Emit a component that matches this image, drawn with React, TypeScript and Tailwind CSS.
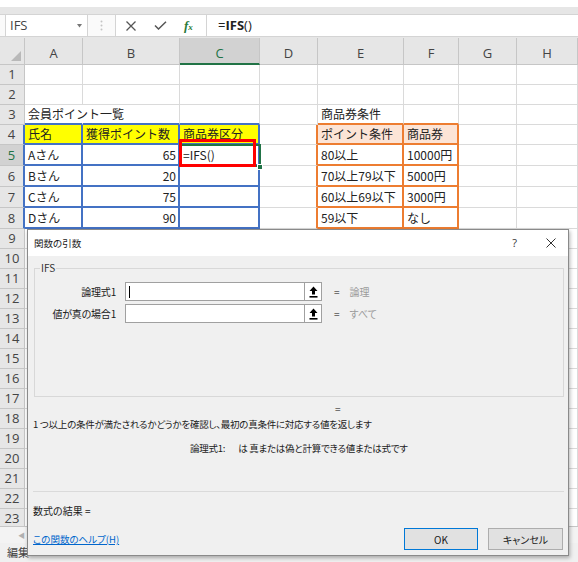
import React from 'react';

const COLW = ['w-[25px]', 'w-[58px]', 'w-[97px]', 'w-[80px]', 'w-[58px]', 'w-[86px]', 'w-[55px]', 'w-[58px]', 'w-[61px]'];
const LETTERS = ['A', 'B', 'C', 'D', 'E', 'F', 'G', 'H'];

type Cell = { t: string; right?: boolean };
const DATA: Record<string, Cell> = {
  '3-1': { t: '会員ポイント一覧' },
  '3-5': { t: '商品券条件' },
  '4-1': { t: '氏名' },
  '4-2': { t: '獲得ポイント数' },
  '4-3': { t: '商品券区分' },
  '4-5': { t: 'ポイント条件' },
  '4-6': { t: '商品券' },
  '5-1': { t: 'Aさん' },
  '5-2': { t: '65', right: true },
  '5-3': { t: '=IFS()' },
  '5-5': { t: '80以上' },
  '5-6': { t: '10000円' },
  '6-1': { t: 'Bさん' },
  '6-2': { t: '20', right: true },
  '6-5': { t: '70以上79以下' },
  '6-6': { t: '5000円' },
  '7-1': { t: 'Cさん' },
  '7-2': { t: '75', right: true },
  '7-5': { t: '60以上69以下' },
  '7-6': { t: '3000円' },
  '8-1': { t: 'Dさん' },
  '8-2': { t: '90', right: true },
  '8-5': { t: '59以下' },
  '8-6': { t: 'なし' },
};

const blue = (r: number, c: number) => r >= 4 && r <= 8 && c >= 1 && c <= 3;
const orange = (r: number, c: number) => r >= 4 && r <= 8 && c >= 5 && c <= 6;

function rightBorder(r: number, c: number) {
  if (blue(r, c) || blue(r, c + 1)) return 'border-r-2 border-r-[#4472c4]';
  if (orange(r, c) || orange(r, c + 1)) return 'border-r-2 border-r-[#ed7d31]';
  if (r === 3 && c === 1) return 'border-r border-r-transparent';
  return 'border-r border-r-[#dadada]';
}
function bottomBorder(r: number, c: number) {
  if (blue(r, c) || blue(r + 1, c)) return 'border-b-2 border-b-[#4472c4]';
  if (orange(r, c) || orange(r + 1, c)) return 'border-b-2 border-b-[#ed7d31]';
  return 'border-b border-b-[#dadada]';
}

function RefIcon() {
  return (
    <svg width="9" height="12" viewBox="0 0 9 12">
      <path d="M4.5 0.5 L8.5 5 H6 V8.5 H3 V5 H0.5 Z" fill="#000" />
      <rect x="0.5" y="10" width="8" height="1.6" fill="#000" />
    </svg>
  );
}

function ArgRow({ label, hint, cursor, extra }: { label: string; hint: string; cursor?: boolean; extra?: string }) {
  return (
    <div className={`flex items-center h-[19px] ${extra ?? ''}`}>
      <div className="w-[81px] text-right text-[#1a1a1a] tracking-[-0.2px]">{label}</div>
      <div className="ml-[9px] w-[180px] h-[19px] bg-white border border-[#a0a0a0] flex items-center pl-[3px]">
        {cursor ? <span className="w-px h-[12px] bg-black" /> : null}
      </div>
      <div className="w-[17px] h-[19px] bg-white border border-l-0 border-[#a0a0a0] flex items-center justify-center">
        <RefIcon />
      </div>
      <span className="ml-[12px] text-[#555]">=</span>
      <span className="ml-[10px] text-[#9b9b9b]">{hint}</span>
    </div>
  );
}

export default function App() {
  const rows: React.ReactNode[] = [];
  for (let r = 1; r <= 23; r++) {
    const h = r <= 4 ? 'h-[20px]' : r <= 8 ? 'h-[21px]' : 'h-[20px]';
    const sel = r === 5;
    rows.push(
      <div key={r} className={`flex ${h}`}>
        <div
          className={`${COLW[0]} shrink-0 flex items-center justify-center text-[13px] leading-none font-['Open_Sans',sans-serif] border-b border-b-[#c6c6c6] ${
            sel ? 'bg-[#d2d2d2] text-[#217346]' : 'bg-[#e6e6e6] text-[#444]'
          } ${r >= 4 && r <= 8 ? 'border-r-2 border-r-[#4472c4]' : 'border-r border-r-[#c6c6c6]'}`}
        >
          {r}
        </div>
        {[1, 2, 3, 4, 5, 6, 7, 8].map((c) => {
          const d = DATA[`${r}-${c}`];
          const bg = r === 4 && c >= 1 && c <= 3 ? 'bg-[#ffff00]' : r === 4 && (c === 5 || c === 6) ? 'bg-[#fce4d6]' : '';
          return (
            <div
              key={c}
              className={`${COLW[c]} shrink-0 flex items-center whitespace-nowrap text-[12px] text-[#222] ${
                d?.right ? 'justify-end pr-[2px]' : 'pl-[3px]'
              } ${bg} ${rightBorder(r, c)} ${bottomBorder(r, c)}`}
            >
              {d?.t}
            </div>
          );
        })}
      </div>
    );
  }

  return (
    <div className="w-[578px] h-[562px] relative overflow-hidden bg-white font-['Noto_Sans_CJK_JP',sans-serif]">
      {/* Formula bar */}
      <div className="h-[7px] bg-white" />
      <div className="h-[31px] bg-[#e6e6e6] pt-[7px]">
        <div className="h-[23px] flex bg-[#fafafa] border-y border-[#d4d4d4]">
          <div className="ml-[5px] w-[83px] bg-white border-x border-[#d4d4d4] flex items-center justify-between pl-[4px] pr-[5px]">
            <span className="text-[13px] text-[#444] font-['Open_Sans',sans-serif]">IFS</span>
            <svg width="5" height="4" viewBox="0 0 5 4">
              <path d="M0 0 H5 L2.5 3.5 Z" fill="#777" />
            </svg>
          </div>
          <div className="w-[27px] flex items-center justify-center">
            <svg width="3" height="11" viewBox="0 0 3 11">
              <circle cx="1.5" cy="1.5" r="1" fill="#c4c4c4" />
              <circle cx="1.5" cy="5.5" r="1" fill="#c4c4c4" />
              <circle cx="1.5" cy="9.5" r="1" fill="#c4c4c4" />
            </svg>
          </div>
          <div className="w-[92px] bg-white border-x border-[#d4d4d4] flex items-center pl-[10px]">
            <svg width="10" height="10" viewBox="0 0 10 10">
              <path d="M0.5 0.5 L9.5 9.5 M9.5 0.5 L0.5 9.5" stroke="#555" strokeWidth="1.3" />
            </svg>
            <svg className="ml-[18px]" width="13" height="9" viewBox="0 0 13 9">
              <path d="M1 4.5 L4.5 8 L12 0.8" stroke="#555" strokeWidth="1.5" fill="none" />
            </svg>
            <span className="ml-[17px] text-[#2a7a3a] font-['Liberation_Serif',serif] italic font-bold text-[13px] leading-none">
              f<span className="text-[9px]">x</span>
            </span>
          </div>
          <div className="flex-1 bg-white flex items-center pl-[11px] text-[13px] text-[#222] font-['Open_Sans',sans-serif]">
            =<span className="font-bold">IFS</span>()
          </div>
        </div>
      </div>

      {/* Sheet */}
      <div className="relative h-[488px] overflow-hidden">
        <div className="flex h-[27px]">
          <div className={`${COLW[0]} shrink-0 bg-[#e6e6e6] border-r border-r-[#c6c6c6] border-b border-b-[#c6c6c6] flex items-end justify-end pr-[3px] pb-[3px]`}>
            <svg width="10" height="10" viewBox="0 0 10 10">
              <path d="M10 0 L10 10 L0 10 Z" fill="#b9b9b9" />
            </svg>
          </div>
          {LETTERS.map((l, i) => (
            <div
              key={l}
              className={`${COLW[i + 1]} shrink-0 flex items-center justify-center pt-[6px] text-[13px] font-['Open_Sans',sans-serif] border-r border-r-[#c6c6c6] ${
                l === 'C' ? 'bg-[#d2d2d2] text-[#217346] border-b-2 border-b-[#217346]' : 'bg-[#e6e6e6] text-[#444] border-b border-b-[#c6c6c6]'
              }`}
            >
              {l}
            </div>
          ))}
        </div>
        {rows}
        {/* active cell selection */}
        <div className="absolute left-[179px] top-[106px] w-[82px] h-[23px] border-2 border-[#217346]" />
        <div className="absolute left-[257px] top-[126px] w-[6px] h-[6px] bg-[#217346] border border-white" />
        {/* red annotation box */}
        <div className="absolute left-[179px] top-[101px] w-[77px] h-[28px] border-[3px] border-[#ff0000]" />
      </div>

      {/* scroll strip + status bar */}
      <div className="h-[17px] bg-[#f3f3f3] border-t border-[#c6c6c6] flex items-center pl-[18px]">
        <span className="text-[7px] text-[#b0b0b0]">◀</span>
      </div>
      <div className="h-[19px] bg-[#f0f0f0] flex items-center pl-[7px] text-[11px] text-[#444]">編集</div>

      {/* Dialog window */}
      <div className="absolute left-[27px] top-[229px] w-[542px] h-[327px] bg-[#f0f0f0] border border-[#8a8a8a] shadow-[1px_2px_4px_rgba(0,0,0,0.3)] text-[10px] text-[#1a1a1a] [font-feature-settings:'palt']">
        <div className="h-[26px] bg-white flex items-center justify-between pl-[6px] pr-[12px]">
          <span className="text-[9.5px]">関数の引数</span>
          <div className="flex items-center gap-[29px]">
            <span className="text-[11px] text-[#333] font-['Open_Sans',sans-serif]">?</span>
            <svg width="10" height="10" viewBox="0 0 10 10">
              <path d="M0.5 0.5 L9.5 9.5 M9.5 0.5 L0.5 9.5" stroke="#333" strokeWidth="1" />
            </svg>
          </div>
        </div>
        <div className="pl-[5px] pr-[5px]">
          <div className="relative mt-[12px] ml-[1px] w-[530px] h-[129px] border border-[#d8d8d8] pt-[13px]">
            <span className="absolute left-[5px] -top-[8px] bg-[#f0f0f0] px-px leading-[14px] text-[#333]">IFS</span>
            <ArgRow label="論理式1" hint="論理" cursor />
            <ArgRow label="値が真の場合1" hint="すべて" extra="mt-[3px]" />
          </div>
          <div className="mt-[6px] h-[12px] leading-[12px] pl-[302px] text-[#555]">=</div>
          <div className="mt-[2px] h-[14px] leading-[14px] whitespace-nowrap text-[9.5px] tracking-[-0.25px]">
            1 つ以上の条件が満たされるかどうかを確認し、最初の真条件に対応する値を返します
          </div>
          <div className="mt-[10px] h-[14px] leading-[14px] pl-[157px] whitespace-nowrap flex text-[9.5px] tracking-[-0.25px]">
            <span>論理式1:</span>
            <span className="ml-[13px]">は 真または偽と計算できる値または式です</span>
          </div>
          <div className="mt-[36px] h-px w-[531px] bg-[#dadada]" />
          <div className="mt-[12px] h-[14px] leading-[14px]">数式の結果 =</div>
          <div className="mt-[10px] h-[22px] flex items-center justify-between">
            <span className="text-[#0066cc] underline text-[9.5px]">この関数のヘルプ(H)</span>
            <div className="flex items-center">
              <div className="w-[74px] h-[22px] bg-[#e1e1e1] border border-[#0078d7] flex items-center justify-center">OK</div>
              <div className="ml-[10px] w-[75px] h-[22px] bg-[#e1e1e1] border border-[#adadad] flex items-center justify-center">
                キャンセル
              </div>
            </div>
          </div>
        </div>
      </div>
    </div>
  );
}
